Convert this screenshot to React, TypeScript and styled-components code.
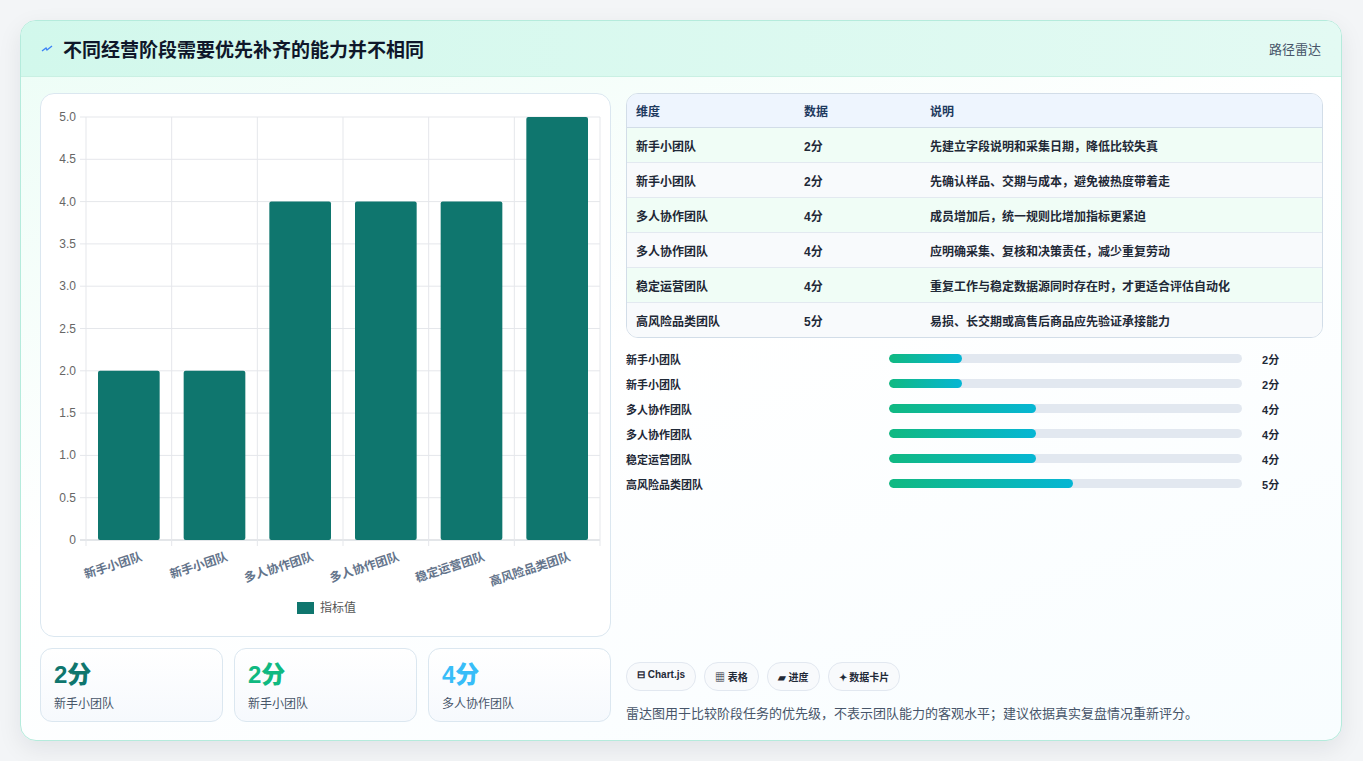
import styled, { createGlobalStyle } from 'styled-components';

const Global = createGlobalStyle`
  body {
    margin: 0;
    background: #f3f5f7;
    font-family: 'Liberation Sans', 'Noto Sans CJK SC', sans-serif;
  }
`;

const rows = [
  { name: '新手小团队', score: 2, note: '先建立字段说明和采集日期，降低比较失真' },
  { name: '新手小团队', score: 2, note: '先确认样品、交期与成本，避免被热度带着走' },
  { name: '多人协作团队', score: 4, note: '成员增加后，统一规则比增加指标更紧迫' },
  { name: '多人协作团队', score: 4, note: '应明确采集、复核和决策责任，减少重复劳动' },
  { name: '稳定运营团队', score: 4, note: '重复工作与稳定数据源同时存在时，才更适合评估自动化' },
  { name: '高风险品类团队', score: 5, note: '易损、长交期或高售后商品应先验证承接能力' },
];

const Page = styled.div`
  padding: 20px 21px 20px 20px;
`;

const Card = styled.div`
  height: 721px;
  box-sizing: border-box;
  border: 1px solid #b5ebdc;
  border-radius: 16px;
  background: linear-gradient(160deg, #ecfdf6 0%, #ffffff 45%, #f8fdff 100%);
  box-shadow: 0 8px 24px rgba(15, 23, 42, 0.08);
  overflow: hidden;
  display: flex;
  flex-direction: column;
`;

const Header = styled.div`
  height: 55px;
  flex-shrink: 0;
  display: flex;
  align-items: center;
  justify-content: space-between;
  padding: 0 20px;
  background: linear-gradient(90deg, #d2f8ec, #e3faf3);
  border-bottom: 1px solid #c9f0e3;
`;

const Title = styled.h1`
  margin: 0;
  display: flex;
  align-items: center;
  gap: 10px;
  font-size: 19px;
  font-weight: 700;
  color: #0f172a;
`;

const Tag = styled.span`
  font-size: 13px;
  color: #475569;
`;

const Body = styled.div`
  flex: 1;
  display: grid;
  grid-template-columns: 571px 1fr;
  gap: 15px;
  padding: 16px 18px 18px 19px;
`;

const Left = styled.div`
  display: flex;
  flex-direction: column;
  gap: 11px;
`;

const ChartBox = styled.div`
  height: 544px;
  box-sizing: border-box;
  background: #fff;
  border: 1px solid #dbe7f0;
  border-radius: 14px;
`;

const Stats = styled.div`
  display: grid;
  grid-template-columns: repeat(3, 1fr);
  gap: 11px;
`;

const Stat = styled.div`
  height: 74px;
  box-sizing: border-box;
  border: 1px solid #dbe7f0;
  border-radius: 12px;
  background: linear-gradient(180deg, #fff, #f6f9fd);
  padding: 12px 13px;
`;

const StatValue = styled.div<{ color: string }>`
  font-size: 24px;
  font-weight: 800;
  color: ${(p) => p.color};
  line-height: 28px;
`;

const StatLabel = styled.div`
  font-size: 12px;
  color: #475569;
  margin-top: 5px;
`;

const Right = styled.div`
  display: flex;
  flex-direction: column;
`;

const Table = styled.table`
  width: 100%;
  border-collapse: separate;
  border-spacing: 0;
  border: 1px solid #d2dde8;
  border-radius: 12px;
  overflow: hidden;
  font-size: 12px;
  th {
    text-align: left;
    background: #eef5fe;
    color: #1e3a5f;
    font-weight: 700;
    height: 33px;
    padding: 0 9px;
    border-bottom: 1px solid #d2dde8;
  }
  td {
    height: 34px;
    padding: 0 9px;
    color: #1f2937;
    font-weight: 600;
    border-bottom: 1px solid #e3e9f0;
  }
  tr:last-child td {
    border-bottom: none;
  }
  tbody tr:nth-child(odd) td {
    background: #f0fdf6;
  }
  tbody tr:nth-child(even) td {
    background: #f8fafc;
  }
`;

const Bars = styled.div`
  margin-top: 12px;
  display: flex;
  flex-direction: column;
  gap: 8px;
`;

const BarRow = styled.div`
  display: grid;
  grid-template-columns: 263px 363px 1fr;
  align-items: center;
  gap: 0;
  font-size: 11px;
  font-weight: 600;
  color: #1f2937;
  height: 17px;
`;

const Track = styled.div`
  height: 9px;
  border-radius: 5px;
  background: #e2e8f0;
  margin-right: 10px;
  overflow: hidden;
`;

const Fill = styled.div`
  height: 100%;
  border-radius: 5px;
  background: linear-gradient(90deg, #10b981, #06b6d4);
`;

const Value = styled.span`
  padding-left: 10px;
`;

const Footer = styled.div`
  margin-top: auto;
`;

const Chips = styled.div`
  display: flex;
  gap: 8px;
`;

const Chip = styled.span`
  border: 1px solid #e2e8f0;
  background: #f8fafc;
  border-radius: 14px;
  padding: 6px 10px;
  font-size: 10px;
  font-weight: 700;
  color: #1f2937;
`;

const Note = styled.p`
  margin: 12px 0 0;
  font-size: 13px;
  color: #475569;
`;

function BarChart() {
  const x0 = 45, x1 = 559, y0 = 23, y1 = 446;
  const w = (x1 - x0) / 6;
  const ticks = [0, 0.5, 1, 1.5, 2, 2.5, 3, 3.5, 4, 4.5, 5];
  const yOf = (v: number) => y1 - (v / 5) * (y1 - y0);
  return (
    <svg width="569" height="542" style={{ display: 'block' }}>
      {ticks.map((t) => (
        <g key={t}>
          <line x1={x0 - 6} x2={x1} y1={yOf(t)} y2={yOf(t)} stroke={t === 0 ? '#c8cdd3' : '#e5e7eb'} />
          <text x={x0 - 10} y={yOf(t) + 4} textAnchor="end" fontSize="12" fill="#666" fontFamily="Liberation Sans">
            {t === 0 ? '0' : t.toFixed(1)}
          </text>
        </g>
      ))}
      {Array.from({ length: 7 }).map((_, i) => (
        <line key={i} x1={x0 + i * w} x2={x0 + i * w} y1={y0} y2={y1 + 6} stroke="#e5e7eb" />
      ))}
      {rows.map((r, i) => (
        <g key={i}>
          <rect x={x0 + i * w + 12} y={yOf(r.score)} width={w - 24} height={y1 - yOf(r.score)} rx="2" fill="#0f766e" />
          <text
            transform={`translate(${x0 + i * w + w / 2 + 14},${y1 + 20}) rotate(-18)`}
            textAnchor="end"
            fontSize="12"
            fontWeight="700"
            fill="#64748b"
          >
            {r.name}
          </text>
        </g>
      ))}
      <rect x="256" y="508" width="17" height="12" fill="#0f766e" />
      <text x="279" y="518" fontSize="12" fill="#555">指标值</text>
    </svg>
  );
}

export default function App() {
  return (
    <>
      <Global />
      <Page>
        <Card>
          <Header>
            <Title>
              <svg width="12" height="10" viewBox="0 0 12 10">
                <path d="M1 7 L5 4 L6 6 L11 2" stroke="#3b82f6" strokeWidth="1.4" fill="none" />
              </svg>
              不同经营阶段需要优先补齐的能力并不相同
            </Title>
            <Tag>路径雷达</Tag>
          </Header>
          <Body>
            <Left>
              <ChartBox>
                <BarChart />
              </ChartBox>
              <Stats>
                <Stat>
                  <StatValue color="#0f766e">2分</StatValue>
                  <StatLabel>新手小团队</StatLabel>
                </Stat>
                <Stat>
                  <StatValue color="#10b981">2分</StatValue>
                  <StatLabel>新手小团队</StatLabel>
                </Stat>
                <Stat>
                  <StatValue color="#38bdf8">4分</StatValue>
                  <StatLabel>多人协作团队</StatLabel>
                </Stat>
              </Stats>
            </Left>
            <Right>
              <Table>
                <thead>
                  <tr>
                    <th style={{ width: 150 }}>维度</th>
                    <th style={{ width: 108 }}>数据</th>
                    <th>说明</th>
                  </tr>
                </thead>
                <tbody>
                  {rows.map((r, i) => (
                    <tr key={i}>
                      <td>{r.name}</td>
                      <td>{r.score}分</td>
                      <td>{r.note}</td>
                    </tr>
                  ))}
                </tbody>
              </Table>
              <Bars>
                {rows.map((r, i) => (
                  <BarRow key={i}>
                    <span>{r.name}</span>
                    <Track>
                      <Fill style={{ width: `${(r.score / 5) * 52}%` }} />
                    </Track>
                    <Value>{r.score}分</Value>
                  </BarRow>
                ))}
              </Bars>
              <Footer>
                <Chips>
                  <Chip>⊟ Chart.js</Chip>
                  <Chip>▦ 表格</Chip>
                  <Chip>▰ 进度</Chip>
                  <Chip>✦ 数据卡片</Chip>
                </Chips>
                <Note>雷达图用于比较阶段任务的优先级，不表示团队能力的客观水平；建议依据真实复盘情况重新评分。</Note>
              </Footer>
            </Right>
          </Body>
        </Card>
      </Page>
    </>
  );
}
